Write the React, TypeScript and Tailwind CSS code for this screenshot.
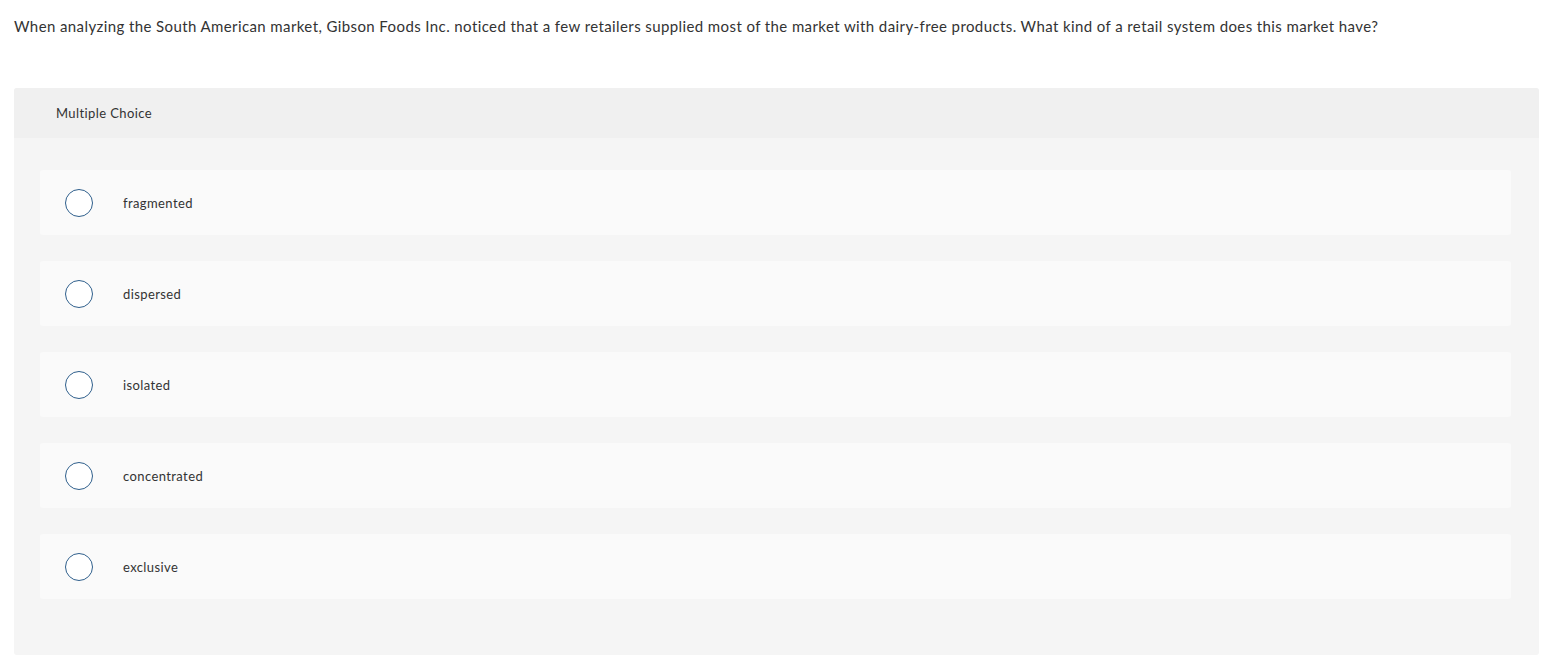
import React from "react";

const choices = ["fragmented", "dispersed", "isolated", "concentrated", "exclusive"];

export default function App() {
  return (
    <div className="min-h-screen bg-white text-[#333] font-['Lato','Open_Sans',sans-serif] tracking-[0.4px]">
      <div className="px-[14px] pt-[16px]">
        <p className="text-[15px] leading-5">
          When analyzing the South American market, Gibson Foods Inc. noticed that a few retailers supplied most of the market with dairy-free products. What kind of a retail system does this market have?
        </p>
      </div>

      <div className="mx-[14px] mt-[52px] w-[1525px] rounded-[3px] bg-[#f5f5f5] overflow-hidden">
        <div className="h-[50px] bg-[#f0f0f0] flex items-center pl-[42px] pt-px text-[13px]">
          Multiple Choice
        </div>
        <div className="pl-[26px] pr-[28px] pt-[32px] pb-[56px] flex flex-col gap-[26px]">
          {choices.map((c) => (
            <div key={c} className="h-[65px] rounded-[3px] bg-[#fafafa] flex items-center">
              <span className="ml-[25px] w-[28px] h-[28px] rounded-full border-[1.5px] border-[#2f5f8c] bg-white shrink-0" />
              <span className="ml-[30px] pt-[3px] text-[13px]">{c}</span>
            </div>
          ))}
        </div>
      </div>
    </div>
  );
}
